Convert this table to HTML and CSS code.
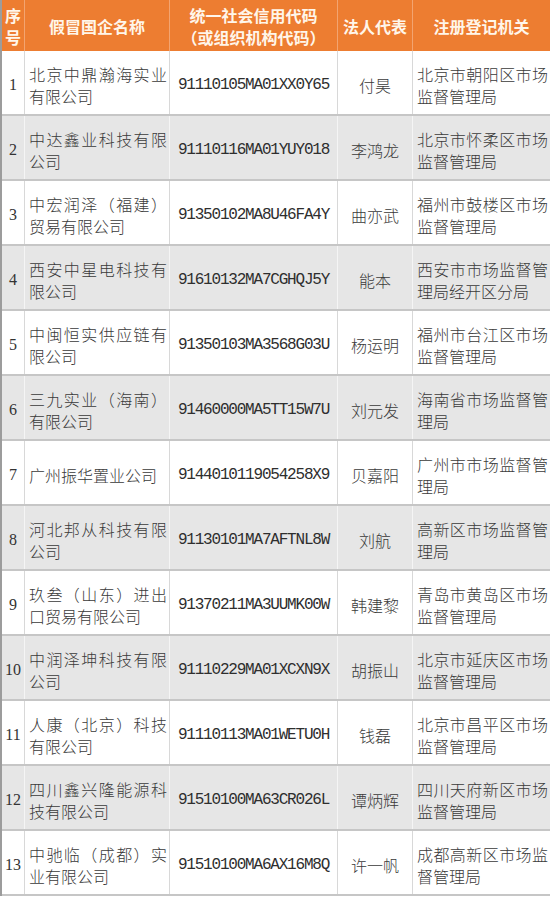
FILE: index.html
```html
<!DOCTYPE html>
<html lang="zh-CN">
<head>
<meta charset="utf-8">
<title>假冒国企名单</title>
<link rel="stylesheet" href="styles.css">
</head>
<body>
<div class="sheet">
  <div class="row head">
    <div class="c c1"><span>序<br>号</span></div>
    <div class="c c2">假冒国企名称</div>
    <div class="c c3">统一社会信用代码<br>（或组织机构代码）</div>
    <div class="c c4">法人代表</div>
    <div class="c c5">注册登记机关</div>
  </div>
  <div class="row">
    <div class="c c1 no">1</div>
    <div class="c c2 name">北京中鼎瀚海实业有限公司</div>
    <div class="c c3 code">91110105MA01XX0Y65</div>
    <div class="c c4">付昊</div>
    <div class="c c5 org">北京市朝阳区市场监督管理局</div>
  </div>
  <div class="row alt">
    <div class="c c1 no">2</div>
    <div class="c c2 name">中达鑫业科技有限公司</div>
    <div class="c c3 code">91110116MA01YUY018</div>
    <div class="c c4">李鸿龙</div>
    <div class="c c5 org">北京市怀柔区市场监督管理局</div>
  </div>
  <div class="row">
    <div class="c c1 no">3</div>
    <div class="c c2 name">中宏润泽（福建）贸易有限公司</div>
    <div class="c c3 code">91350102MA8U46FA4Y</div>
    <div class="c c4">曲亦武</div>
    <div class="c c5 org">福州市鼓楼区市场监督管理局</div>
  </div>
  <div class="row alt">
    <div class="c c1 no">4</div>
    <div class="c c2 name">西安中星电科技有限公司</div>
    <div class="c c3 code">91610132MA7CGHQJ5Y</div>
    <div class="c c4">能本</div>
    <div class="c c5 org">西安市市场监督管理局经开区分局</div>
  </div>
  <div class="row">
    <div class="c c1 no">5</div>
    <div class="c c2 name">中闽恒实供应链有限公司</div>
    <div class="c c3 code">91350103MA3568G03U</div>
    <div class="c c4">杨运明</div>
    <div class="c c5 org">福州市台江区市场监督管理局</div>
  </div>
  <div class="row alt">
    <div class="c c1 no">6</div>
    <div class="c c2 name">三九实业（海南）有限公司</div>
    <div class="c c3 code">91460000MA5TT15W7U</div>
    <div class="c c4">刘元发</div>
    <div class="c c5 org">海南省市场监督管理局</div>
  </div>
  <div class="row">
    <div class="c c1 no">7</div>
    <div class="c c2 name">广州振华置业公司</div>
    <div class="c c3 code">9144010119054258X9</div>
    <div class="c c4">贝嘉阳</div>
    <div class="c c5 org">广州市市场监督管理局</div>
  </div>
  <div class="row alt">
    <div class="c c1 no">8</div>
    <div class="c c2 name">河北邦从科技有限公司</div>
    <div class="c c3 code">91130101MA7AFTNL8W</div>
    <div class="c c4">刘航</div>
    <div class="c c5 org">高新区市场监督管理局</div>
  </div>
  <div class="row">
    <div class="c c1 no">9</div>
    <div class="c c2 name">玖叁（山东）进出口贸易有限公司</div>
    <div class="c c3 code">91370211MA3UUMK00W</div>
    <div class="c c4">韩建黎</div>
    <div class="c c5 org">青岛市黄岛区市场监督管理局</div>
  </div>
  <div class="row alt">
    <div class="c c1 no">10</div>
    <div class="c c2 name">中润泽坤科技有限公司</div>
    <div class="c c3 code">91110229MA01XCXN9X</div>
    <div class="c c4">胡振山</div>
    <div class="c c5 org">北京市延庆区市场监督管理局</div>
  </div>
  <div class="row">
    <div class="c c1 no">11</div>
    <div class="c c2 name">人康（北京）科技有限公司</div>
    <div class="c c3 code">91110113MA01WETU0H</div>
    <div class="c c4">钱磊</div>
    <div class="c c5 org">北京市昌平区市场监督管理局</div>
  </div>
  <div class="row alt">
    <div class="c c1 no">12</div>
    <div class="c c2 name">四川鑫兴隆能源科技有限公司</div>
    <div class="c c3 code">91510100MA63CR026L</div>
    <div class="c c4">谭炳辉</div>
    <div class="c c5 org">四川天府新区市场监督管理局</div>
  </div>
  <div class="row">
    <div class="c c1 no">13</div>
    <div class="c c2 name">中驰临（成都）实业有限公司</div>
    <div class="c c3 code">91510100MA6AX16M8Q</div>
    <div class="c c4">许一帆</div>
    <div class="c c5 org">成都高新区市场监督管理局</div>
  </div>
</div>
</body>
</html>
```

FILE: styles.css
```css
html, body {
  margin: 0;
  padding: 0;
  background: #ffffff;
}

body {
  font-family: "Noto Sans CJK SC", "Liberation Serif", serif;
  font-size: 16px;
  color: #3a3a3a;
}

.sheet {
  width: 550px;
  box-sizing: border-box;
  border-left: 2px solid #9c9c9c;
}

.row {
  display: grid;
  grid-template-columns: 23px 145px 168px 75px 137px;
  height: 65px;
  box-sizing: border-box;
  border-bottom: 2px solid #c6c6c6;
  background: #ffffff;
}

.row.alt {
  background: #e6e6e6;
}

.c {
  display: flex;
  align-items: center;
  justify-content: center;
  text-align: center;
  line-height: 22px;
  box-sizing: border-box;
  padding-top: 5px;
  border-right: 1px solid #d8d8d8;
  font-weight: 300;
}

.row.alt .c {
  border-right-color: #f5f5f5;
}

.row .c5 {
  border-right: none;
}

.row.head {
  height: 51px;
  background: #ed7d31;
  border-bottom: none;
}

.row.head .c {
  padding: 0;
  color: #fff6ea;
  font-weight: 700;
  border-right: 1px solid #f3a470;
}

.row.head .c5 {
  border-right: none;
}

.no {
  font-family: "Liberation Serif", serif;
  font-weight: 400;
  color: #333333;
}

.name,
.org {
  justify-content: flex-start;
  text-align: justify;
  padding-left: 4px;
  padding-right: 2px;
}

.code {
  font-family: "Liberation Mono", monospace;
  letter-spacing: -1.2px;
  font-weight: 400;
  color: #2e2e2e;
}
```
